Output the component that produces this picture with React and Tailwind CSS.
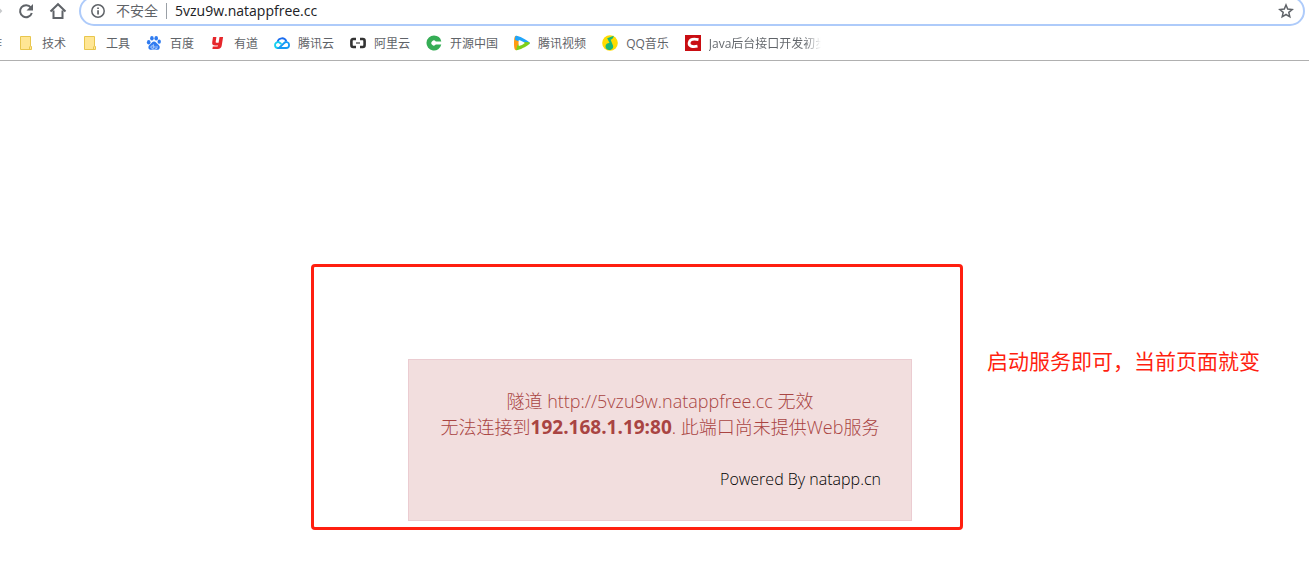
function ForwardIcon() {
  return (
    <svg viewBox="0 0 3 16" className="h-4 w-[3px]">
      <path d="M-3 4l4 4-4 4" fill="none" stroke="#c8cacc" strokeWidth="2" />
    </svg>
  );
}

function ReloadIcon() {
  return (
    <svg viewBox="0 0 16 16" className="size-4">
      <path d="M12.9 4.6A6 6 0 1 0 13.8 10" fill="none" stroke="#5f6368" strokeWidth="2" />
      <path d="M15 1v6.5H8.5z" fill="#5f6368" />
    </svg>
  );
}

function HomeIcon() {
  return (
    <svg viewBox="0 0 18 18" className="size-[18px]">
      <path
        d="M1.5 9.5L9 2.200l7.500 7.300M4.500 8.500V16h9V8.500"
        fill="none"
        stroke="#5f6368"
        strokeWidth="2"
      />
    </svg>
  );
}

function InfoIcon() {
  return (
    <svg viewBox="0 0 16 16" className="size-4 shrink-0">
      <circle cx="8" cy="8" r="6.2" fill="none" stroke="#5f6368" strokeWidth="1.5" />
      <path d="M7.2 7.2h1.7v4.2H7.2zM7.2 4.4h1.7v1.7H7.2z" fill="#5f6368" />
    </svg>
  );
}

function StarIcon() {
  return (
    <svg viewBox="0 0 16 16" className="size-4">
      <path
        d="M8 2l1.7 4.1 4.5.4-3.4 2.9 1 4.4L8 11.5l-3.8 2.3 1-4.4-3.4-2.9 4.5-.4z"
        fill="none"
        stroke="#5f6368"
        strokeWidth="1.5"
      />
    </svg>
  );
}

function FolderIcon() {
  return (
    <svg viewBox="0 0 16 16" className="size-4 shrink-0">
      <path d="M2.5 1.5h10v9.5l1 .5v3h-11z" fill="#ffe694" stroke="#e8c64d" />
      <path d="M11.5 14.5v-2.5l1-1" fill="none" stroke="#e8c64d" />
    </svg>
  );
}

function BaiduIcon() {
  return (
    <svg viewBox="0 0 16 16" className="size-4 shrink-0">
      <g fill="#2f7bf0">
        <ellipse cx="2.7" cy="7.2" rx="1.8" ry="2.2" />
        <ellipse cx="5.9" cy="3.2" rx="1.8" ry="2.3" />
        <ellipse cx="10.2" cy="3.2" rx="1.8" ry="2.3" />
        <ellipse cx="13.2" cy="6.7" rx="1.7" ry="2.1" />
        <path d="M8 6.4c1.8 0 2.5 1.500 3.600 2.600 1.200 1.200 2.400 2 2.100 3.700-.3 2-2 2.200-3.200 2-1.600-.3-3.300-.3-4.900 0-1.300.2-3-.2-3.200-2-.2-1.800 1.100-2.600 2.100-3.600C5.500 8 6.300 6.400 8 6.400z" />
      </g>
      <path d="M7.400 9.300v4H6a1.200 1.200 0 0 1 0-2.400h1.200M8.900 10.800v1.900c0 .5.300.7.800.7h1.300v-2.600" fill="none" stroke="#cfe1ff" strokeWidth=".8" />
    </svg>
  );
}

function YoudaoIcon() {
  return (
    <svg viewBox="0 0 16 16" className="size-4 shrink-0">
      <path
        d="M3 2h3.400l-.7 4.800c-.1.600.1.900.7.900h2.200L9.500 2h3.600l-1.300 8.300c-.4 2.600-1.700 3.700-4.200 3.700H2.400l.4-2.600h4c.8 0 1.200-.3 1.300-1H5.200c-2.300 0-3.300-1.100-3-3.200z"
        fill="#e6262b"
      />
    </svg>
  );
}

function TencentCloudIcon() {
  return (
    <svg viewBox="0 0 16 16" className="size-4 shrink-0" fill="none" strokeWidth="1.8">
      <path d="M3.5 7A4.600 4.600 0 0 1 12.300 6.200" stroke="#1a6df0" />
      <path d="M7.5 9L4.800 7.200A3 3 0 0 0 1 10c0 1.800 1.200 3 3 3h2" stroke="#15d0f0" />
      <path d="M5 13l5.200-5c2-2 4.900-.6 4.900 1.900 0 1.800-1.300 3.100-3.100 3.100z" stroke="#159af5" />
    </svg>
  );
}

function AliyunIcon() {
  return (
    <svg viewBox="0 0 16 16" className="size-4 shrink-0">
      <path
        d="M6 4H3.200C2 4 1.400 4.700 1.400 6v4c0 1.300.6 2 1.800 2H6M10 4h2.800C14 4 14.600 4.700 14.600 6v4c0 1.300-.6 2-1.800 2H10"
        fill="none"
        stroke="#333"
        strokeWidth="2.6"
      />
      <path d="M6 7.300h4v1.400H6z" fill="#555" />
    </svg>
  );
}

function OschinaIcon() {
  return (
    <svg viewBox="0 0 16 16" className="size-4 shrink-0">
      <path
        d="M8 .5a7.500 7.500 0 0 1 7.300 5.900H9.800a2.500 2.500 0 1 0 0 3.200h5.500A7.500 7.500 0 1 1 8 .5z"
        fill="#35ad55"
      />
    </svg>
  );
}

function TencentVideoIcon() {
  return (
    <svg viewBox="0 0 16 16" className="size-4 shrink-0">
      <path d="M2 .8C.6 1 0 3 0 8s.6 7 2 7.200l5-3V3z" fill="#ff9a12" />
      <path d="M2 .8C4 .3 12 4.500 15 7c1 .8 1 1.500 0 2.300L10 8 1 5C1 2.500 1.300 1 2 .8z" fill="#20a5fa" />
      <path d="M15.300 7.300c.7.700.5 1.400-.3 2-3 2.500-10.500 6.500-13 5.900L3.500 10 11 7z" fill="#7dcf1a" />
      <path d="M4.800 5c2.200.5 4.200 1.600 6 3-1.800 1.500-3.800 2.500-6 3-.4-2-.4-4 0-6z" fill="#fff" />
    </svg>
  );
}

function QQMusicIcon() {
  return (
    <svg viewBox="0 0 16 16" className="size-4 shrink-0">
      <circle cx="8" cy="8" r="7.8" fill="#ffdc00" />
      <path d="M11.700.8L5.200 3.200l2.300 4.900C5.200 8 3.500 9.500 3.500 11.600c0 2 1.600 3.500 3.700 3.500 2.600 0 4.400-1.800 3.900-4.300L8.600 4.700c1.500-.3 3-1.700 3.100-3.900z" fill="#1bb979" />
    </svg>
  );
}

function CsdnIcon() {
  return (
    <svg viewBox="0 0 16 16" className="size-4 shrink-0">
      <path d="M0 0h16v16H0z" fill="#c90d12" />
      <path d="M13.500 4.700C9 3.700 5 4.200 4.200 7.500c-.8 3.700 3 4.700 8.300 3.700" fill="none" stroke="#fff" strokeWidth="2.8" />
    </svg>
  );
}

const bookmarks = [
  { label: "技术", Icon: FolderIcon },
  { label: "工具", Icon: FolderIcon },
  { label: "百度", Icon: BaiduIcon },
  { label: "有道", Icon: YoudaoIcon },
  { label: "腾讯云", Icon: TencentCloudIcon },
  { label: "阿里云", Icon: AliyunIcon },
  { label: "开源中国", Icon: OschinaIcon },
  { label: "腾讯视频", Icon: TencentVideoIcon },
  { label: "QQ音乐", Icon: QQMusicIcon },
  { label: "Java后台接口开发初步", Icon: CsdnIcon, faded: true },
];

function Toolbar() {
  return (
    <div className="flex h-[26px] items-end overflow-hidden">
      <div className="flex h-[30px] shrink-0 items-center">
        <button type="button" aria-label="前进">
          <ForwardIcon />
        </button>
        <button type="button" aria-label="重新加载" className="ml-[15px]">
          <ReloadIcon />
        </button>
        <button type="button" aria-label="主页" className="ml-[15px]">
          <HomeIcon />
        </button>
      </div>
      <div className="mr-1 ml-3 flex h-[30px] min-w-0 flex-1 items-center rounded-full border-2 border-[#aecbfa] px-[9px]">
        <button type="button" className="flex shrink-0 items-center gap-[10px] text-sm text-[#5f6368]">
          <InfoIcon />
          不安全
        </button>
        <span className="mx-2 h-4 w-px bg-[#9aa0a6]" />
        <input
          type="text"
          aria-label="地址"
          defaultValue="5vzu9w.natappfree.cc"
          className="min-w-0 flex-1 text-sm text-[#202124] outline-none"
        />
        <button type="button" aria-label="收藏">
          <StarIcon />
        </button>
      </div>
    </div>
  );
}

function BookmarkBar() {
  return (
    <nav className="flex h-[35px] items-center gap-4 overflow-hidden border-b border-[#b0b0b0] text-xs text-[#5f6368]">
      <a href="#" className="flex w-[2px] shrink-0 justify-end overflow-hidden pt-px">
        作
      </a>
      {bookmarks.map(({ label, Icon, faded }) => (
        <a key={label} href="#" className="flex shrink-0 items-center gap-2 whitespace-nowrap">
          <Icon />
          {faded ? (
            <span className="w-28 overflow-hidden bg-linear-to-r from-[#5f6368] from-85% to-transparent bg-clip-text pt-px text-transparent">
              {label}
            </span>
          ) : (
            <span className="pt-px">{label}</span>
          )}
        </a>
      ))}
    </nav>
  );
}

function TunnelError() {
  return (
    <section className="w-[504px] border border-[#ebccd1] bg-[#f2dede] py-7 text-center text-lg leading-[26px] font-light text-[#a94442]">
      <p>隧道 http://5vzu9w.natappfree.cc 无效</p>
      <p className="whitespace-nowrap">
        无法连接到<strong className="text-[19px] font-bold">192.168.1.19:80</strong>. 此端口尚未提供Web服务
      </p>
      <p className="mt-[26px] px-[30px] text-right text-base leading-[26px] text-black">
        Powered By <a href="#">natapp.cn</a>
      </p>
    </section>
  );
}

export default function App() {
  return (
    <div className="min-h-screen bg-white font-['Open_Sans','Noto_Sans_CJK_SC',sans-serif]">
      <header>
        <Toolbar />
        <BookmarkBar />
      </header>
      <main className="flex items-start justify-end gap-6 pt-[203px] pr-[49px]">
        <div className="rounded-sm border-3 border-[#ff1f10] pt-[92px] pr-12 pb-[6px] pl-[94px]">
          <TunnelError />
        </div>
        <p className="mt-[81px] text-[21px] leading-8 whitespace-nowrap text-[#ff1f10]">
          启动服务即可，当前页面就变
        </p>
      </main>
    </div>
  );
}
